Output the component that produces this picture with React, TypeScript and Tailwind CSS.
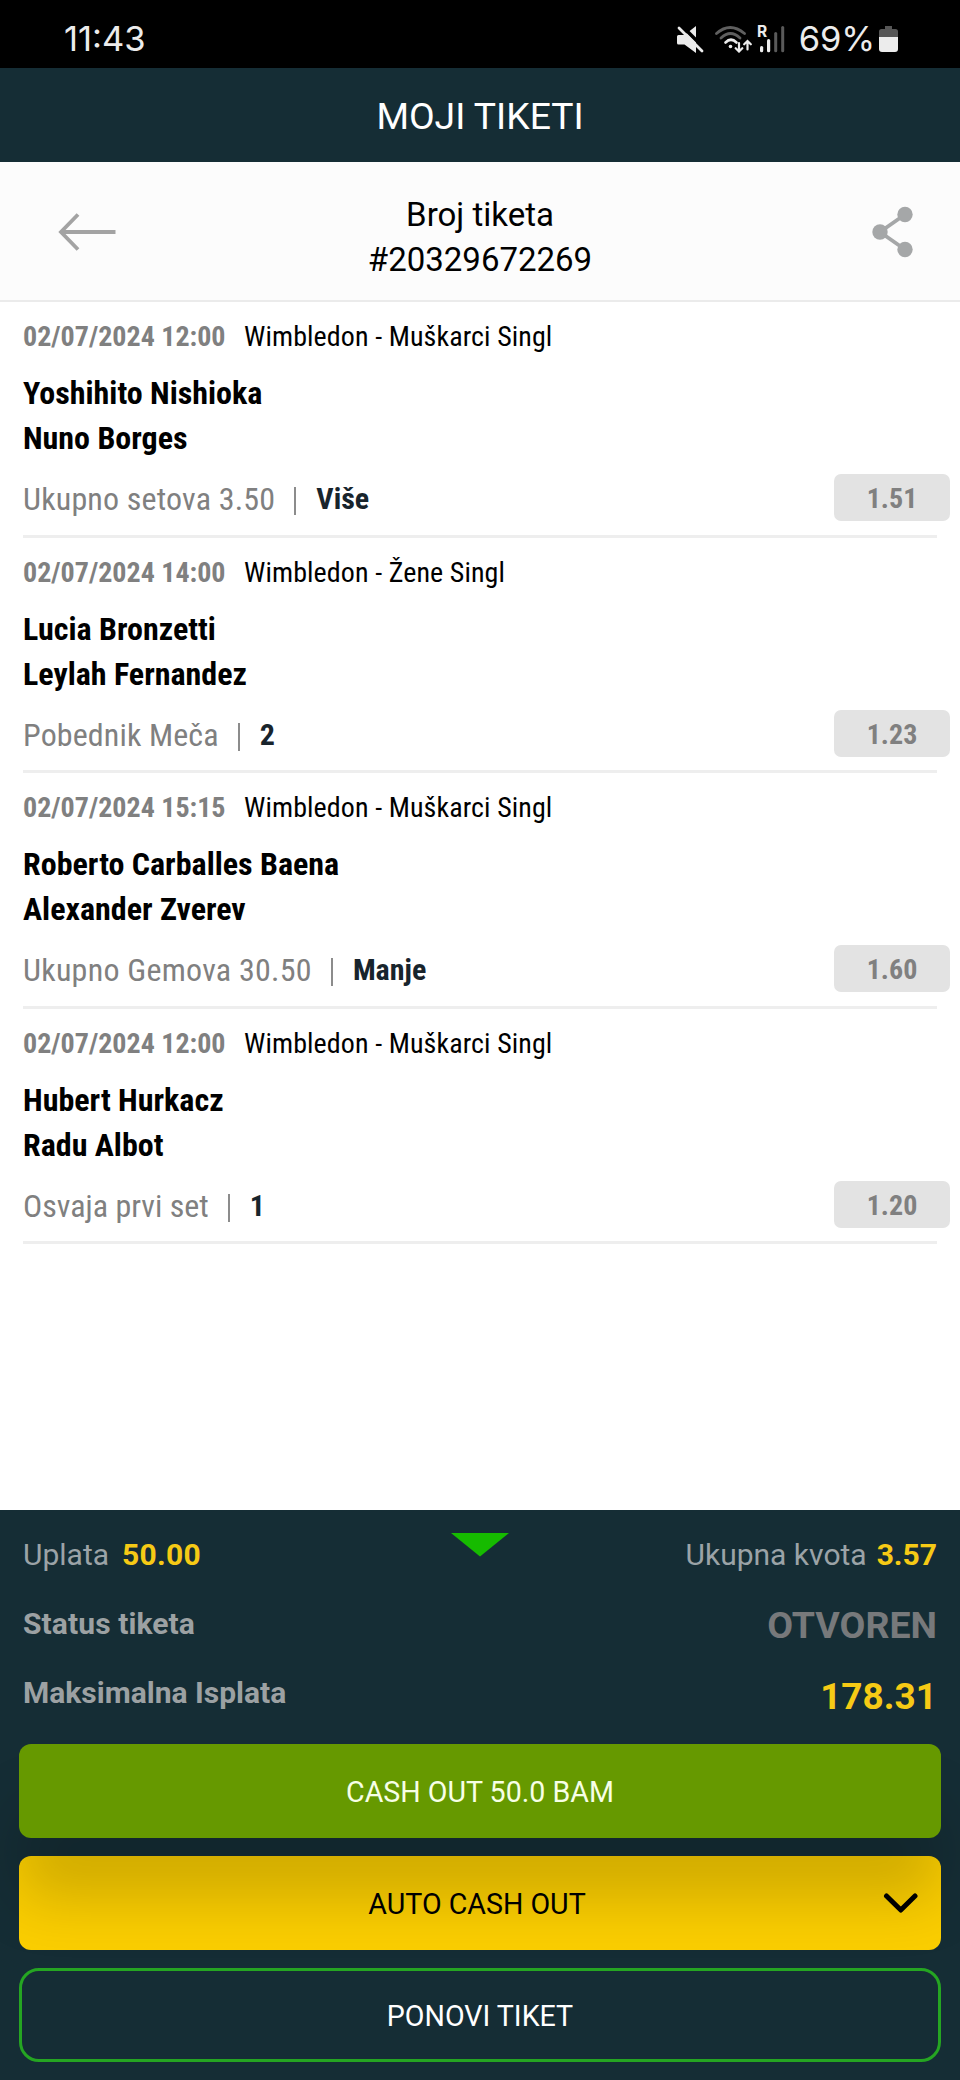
type Bet = {
  date: string;
  league: string;
  players: string[];
  market: string;
  pick: string;
  odd: string;
  tracking: string;
};

const bets: Bet[] = [
  {
    date: "02/07/2024 12:00",
    league: "Wimbledon - Muškarci Singl",
    players: ["Yoshihito Nishioka", "Nuno Borges"],
    market: "Ukupno setova 3.50",
    pick: "Više",
    odd: "1.51",
    tracking: "tracking-[0.18px]",
  },
  {
    date: "02/07/2024 14:00",
    league: "Wimbledon - Žene Singl",
    players: ["Lucia Bronzetti", "Leylah Fernandez"],
    market: "Pobednik Meča",
    pick: "2",
    odd: "1.23",
    tracking: "tracking-[0.12px]",
  },
  {
    date: "02/07/2024 15:15",
    league: "Wimbledon - Muškarci Singl",
    players: ["Roberto Carballes Baena", "Alexander Zverev"],
    market: "Ukupno Gemova 30.50",
    pick: "Manje",
    odd: "1.60",
    tracking: "tracking-[0.25px]",
  },
  {
    date: "02/07/2024 12:00",
    league: "Wimbledon - Muškarci Singl",
    players: ["Hubert Hurkacz", "Radu Albot"],
    market: "Osvaja prvi set",
    pick: "1",
    odd: "1.20",
    tracking: "tracking-normal",
  },
];

const StatusIcons = () => (
  <div className="flex items-start text-[#ececec]">
    {/* muted speaker */}
    <svg width="28" height="28" viewBox="0 0 28 28" className="mr-[10px]">
      <path d="M2.5 10h6L20 1v27L8.5 19.5h-6A1.5 1.5 0 0 1 1 18v-6.5A1.5 1.5 0 0 1 2.5 10z" fill="currentColor" />
      <path d="M5 0L28 23" stroke="#000" strokeWidth="3.5" />
      <path d="M3 3L26 26" stroke="currentColor" strokeWidth="2.8" strokeLinecap="round" />
    </svg>
    {/* wifi with traffic arrows */}
    <svg width="38" height="28" viewBox="0 0 38 28" fill="none" strokeLinecap="round" className="mr-[5px]">
      <path d="M2.5 8.5Q16 -3.5 30.5 8.5" stroke="#5f5f5f" strokeWidth="2.8" />
      <path d="M7 13Q16.5 4 26 13" stroke="#5f5f5f" strokeWidth="2.8" />
      <path d="M11.5 17.5Q17 12 22.5 17.5" stroke="currentColor" strokeWidth="2.6" />
      <circle cx="16.5" cy="21.5" r="1.8" fill="currentColor" />
      <path d="M25 18v8M21.7 23.2l3.3 3.3 3.3-3.3" stroke="currentColor" strokeWidth="2.2" />
      <path d="M33.5 24.5v-8M30.2 19.3l3.3-3.3 3.3 3.3" stroke="currentColor" strokeWidth="2.2" />
    </svg>
    {/* roaming signal */}
    <svg width="30" height="28" viewBox="0 0 30 28" className="mr-[12px] overflow-visible">
      <text x="0" y="12" fill="currentColor" fontFamily="Inter, sans-serif" fontWeight="700" fontSize="15.5">R</text>
      <rect x="3" y="21" width="3.2" height="6.3" rx="1.5" fill="currentColor" />
      <rect x="10" y="14" width="3.2" height="13.3" rx="1.5" fill="currentColor" />
      <rect x="17.2" y="7" width="3" height="20.3" rx="1.5" fill="#5a5a5a" />
      <rect x="24.2" y="1" width="3" height="26.3" rx="1.5" fill="#5a5a5a" />
    </svg>
  </div>
);

const StatusBar = () => (
  <div className="flex h-[68px] items-start justify-between bg-black pr-[62px] pl-[64px] pt-[25px] font-[Inter,sans-serif] text-[34.5px] text-[#ececec]">
    <span className="mt-[-3px] leading-[34px]">11:43</span>
    <div className="flex items-start">
      <StatusIcons />
      <span className="mt-[-3px] mr-[4px] leading-[34px] tracking-[-0.1px]">69%</span>
      <svg width="19" height="28" viewBox="0 0 19 28">
        <path d="M6 1h7v3h3.5A2.5 2.5 0 0 1 19 6.5v6H0v-6A2.5 2.5 0 0 1 2.5 4H6z" fill="#565656" />
        <path d="M0 12h19v12a3 3 0 0 1-3 3H3a3 3 0 0 1-3-3z" fill="#ececec" />
      </svg>
    </div>
  </div>
);

const BetRow = ({ bet }: { bet: Bet }) => (
  <div className="h-[235.5px] pr-[10px] pl-[23px] font-['Roboto_Condensed',Roboto,sans-serif]">
    <div className="mr-[13px] h-full border-b-3 border-[#eeeeee] pt-[21px]">
      <div className="flex text-[28px] leading-[28px]">
        <span className="w-[221px] font-bold text-[#808080]">{bet.date}</span>
        <span className="tracking-[0.1px] text-black">{bet.league}</span>
      </div>
      <div className="mt-5 text-[32px] leading-[45px] font-bold text-black">
        {bet.players.map((player) => (
          <p key={player}>{player}</p>
        ))}
      </div>
      <div className="mt-[13px] mr-[-13px] flex h-[47px] items-center justify-between">
        <div className="flex pt-[3px] leading-[32px]">
          <span className={`text-[32px] text-[#808080] ${bet.tracking}`}>{bet.market}</span>
          <span className="mt-[4px] mr-[20px] ml-[19px] h-[28px] w-[2px] bg-[#8c8c8c]" />
          <span className="text-[30px] font-bold text-[#18242c]">{bet.pick}</span>
        </div>
        <span className="flex h-[47px] w-[116px] items-center justify-center rounded-[7px] bg-[#e3e3e3] pt-[3px] text-[28px] font-bold text-[#808080]">
          {bet.odd}
        </span>
      </div>
    </div>
  </div>
);

export default function App() {
  return (
    <div className="flex h-[2080px] w-[960px] flex-col overflow-hidden bg-white font-[Roboto,sans-serif]">
      <StatusBar />

      <header className="flex h-[94px] items-center justify-center bg-[#152d35] pt-[4px] text-[37.3px] text-white">
        MOJI TIKETI
      </header>

      <div className="flex h-[140px] items-center justify-between border-b-2 border-[#ebebeb] bg-[#fcfcfc] pr-[46px] pl-[58px]">
        <svg width="58" height="38" viewBox="0 0 58 38" fill="none" stroke="#a3a3a3" strokeWidth="3.8" className="mt-[2px]">
          <path d="M57.5 19H3M20 1.5L3 19l17 17.5" />
        </svg>
        <div className="pt-[11px] text-center text-[33px] leading-[45px] text-black">
          <p>Broj tiketa</p>
          <p>#20329672269</p>
        </div>
        <div className="flex w-[70px] justify-end pt-px">
          <svg width="42" height="52" viewBox="0 0 42 52" fill="#a5a7a8">
            <path d="M33 8.5L8 26l25 17.5" fill="none" stroke="#a5a7a8" strokeWidth="3.8" />
            <circle cx="33" cy="8.5" r="7.7" />
            <circle cx="8" cy="26" r="7.7" />
            <circle cx="33" cy="43.5" r="7.7" />
          </svg>
        </div>
      </div>

      <main className="flex-1">
        {bets.map((bet, i) => (
          <BetRow key={i} bet={bet} />
        ))}
      </main>

      <footer className="h-[570px] bg-[#152d35] px-[19px] pt-[23px]">
        <div className="grid h-[44px] grid-cols-3 px-1 text-[30px] leading-[43px] text-[#9ba3a7]">
          <p>
            Uplata<span className="ml-[13px] font-bold tracking-[0.3px] text-[#f6ca15]">50.00</span>
          </p>
          <svg width="58" height="24" viewBox="0 0 58 24" className="justify-self-center">
            <path d="M0 0h58L29 23.5z" fill="#16bb00" />
          </svg>
          <p className="text-right">
            Ukupna kvota<span className="ml-[10px] font-bold text-[#f6ca15]">3.57</span>
          </p>
        </div>
        <div className="mt-[22px] flex h-[48px] items-center justify-between px-1 font-bold">
          <span className="text-[30px] tracking-[0.1px] text-[#9ca1a3]">Status tiketa</span>
          <span className="pt-[4px] text-[37.5px] text-[#77797b]">OTVOREN</span>
        </div>
        <div className="mt-[21px] flex h-[48px] items-center justify-between px-1 font-bold">
          <span className="text-[30px] text-[#9ca1a3]">Maksimalna Isplata</span>
          <span className="pt-[10px] text-[37px] text-[#f6ca15]">178.31</span>
        </div>

        <div className="mt-[28px] flex flex-col gap-[18px] text-[28.6px]">
          <button type="button" className="relative z-10 h-[94px] rounded-xl bg-[#669900] pt-[3px] text-[#f7ffe6] shadow-[0_62px_60px_0px_rgba(0,0,0,0.17)]">
            CASH OUT 50.0 BAM
          </button>
          <button type="button" className="relative h-[94px] rounded-xl bg-[#fbce00] pt-[3px] pr-[13px] pl-[7px] text-black">
            AUTO CASH OUT
            <svg width="36" height="20" viewBox="0 0 36 20" className="absolute top-[37px] right-[22px]">
              <path d="M3.5 3l14.3 14L32 3" fill="none" stroke="#000" strokeWidth="5" strokeLinecap="round" strokeLinejoin="round" />
            </svg>
          </button>
          <button type="button" className="h-[94px] rounded-[20px] border-3 border-[#25a522] pt-[3px] text-white">
            PONOVI TIKET
          </button>
        </div>
      </footer>
    </div>
  );
}
